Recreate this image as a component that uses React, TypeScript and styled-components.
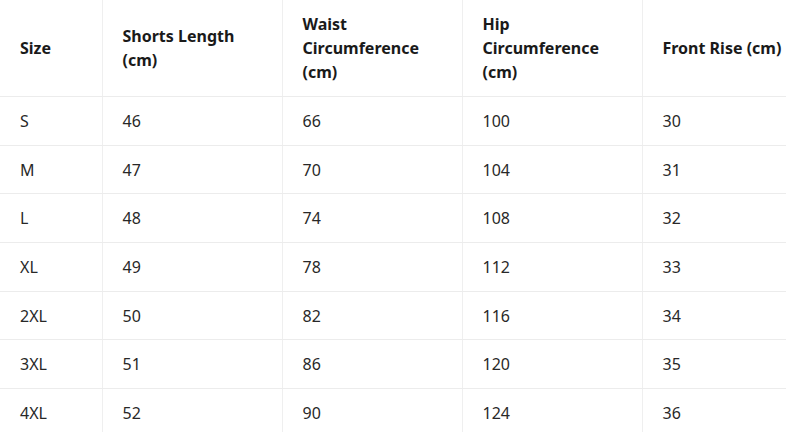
import styled, { createGlobalStyle } from 'styled-components'

const GlobalStyle = createGlobalStyle`
  html, body {
    margin: 0;
    padding: 0;
    background: #ffffff;
    overflow: hidden;
  }
  body {
    font-family: 'Noto Sans', 'Open Sans', 'Liberation Sans', sans-serif;
  }
`

const Table = styled.table`
  border-collapse: collapse;
  table-layout: fixed;
  width: 786px;
  font-size: 16px;
  color: #282828;
`

const Col = styled.col<{ $w: number }>`
  width: ${({ $w }) => $w}px;
`

const HeadCell = styled.th`
  text-align: left;
  font-weight: 700;
  color: #1a1a1a;
  line-height: 24px;
  padding: 12px 20px;
  height: 96px;
  box-sizing: border-box;
  border-right: 1px solid #efefef;
  border-bottom: 1px solid #ececec;
  vertical-align: middle;

  &:last-child {
    padding-right: 0;
    white-space: nowrap;
    border-right: none;
  }
`

const Cell = styled.td`
  line-height: 24px;
  padding: 0 20px;
  height: 48.7px;
  box-sizing: border-box;
  border-right: 1px solid #efefef;
  border-bottom: 1px solid #ececec;
  vertical-align: middle;

  &:last-child {
    padding-right: 0;
    border-right: none;
  }
`

const headers = [
  'Size',
  'Shorts Length (cm)',
  'Waist Circumference (cm)',
  'Hip Circumference (cm)',
  'Front Rise (cm)',
]

const rows = [
  ['S', '46', '66', '100', '30'],
  ['M', '47', '70', '104', '31'],
  ['L', '48', '74', '108', '32'],
  ['XL', '49', '78', '112', '33'],
  ['2XL', '50', '82', '116', '34'],
  ['3XL', '51', '86', '120', '35'],
  ['4XL', '52', '90', '124', '36'],
]

const widths = [102, 180, 180, 180, 144]

export default function App() {
  return (
    <>
      <GlobalStyle />
      <Table>
        <colgroup>
          {widths.map((w, i) => (
            <Col key={i} $w={w} />
          ))}
        </colgroup>
        <thead>
          <tr>
            {headers.map((h) => (
              <HeadCell key={h}>{h}</HeadCell>
            ))}
          </tr>
        </thead>
        <tbody>
          {rows.map((row) => (
            <tr key={row[0]}>
              {row.map((v, i) => (
                <Cell key={i}>{v}</Cell>
              ))}
            </tr>
          ))}
        </tbody>
      </Table>
    </>
  )
}
